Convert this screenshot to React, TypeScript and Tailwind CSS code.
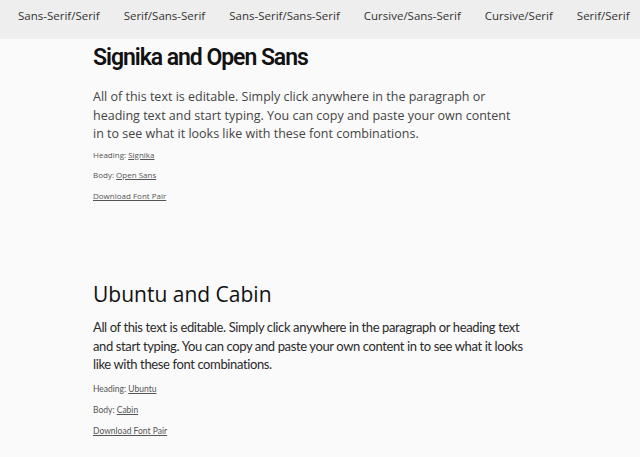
import React from "react";

const navItems = [
  "Sans-Serif/Serif",
  "Serif/Sans-Serif",
  "Sans-Serif/Sans-Serif",
  "Cursive/Sans-Serif",
  "Cursive/Serif",
  "Serif/Serif",
];

export default function App() {
  return (
    <div className="w-[640px] h-[457px] overflow-hidden bg-[#fafafa] font-['Open_Sans',sans-serif]">
      <nav className="h-[39px] bg-[#eeeeee] flex pl-[6px] pt-[8px] whitespace-nowrap overflow-hidden">
        {navItems.map((n) => (
          <span key={n} className="px-[12px] text-[11.5px] leading-[16px] text-[#333] font-['Open_Sans',sans-serif]">
            {n}
          </span>
        ))}
      </nav>

      <main className="pl-[93px]">
        <section className="pt-[5px]">
          <h1 className="text-[23px] leading-[28px] font-semibold text-[#111] tracking-[-1.05px] font-['Roboto',sans-serif]">
            Signika and Open Sans
          </h1>
          <p className="mt-[16px] w-[426px] text-[12.5px] leading-[18.5px] text-[#444] font-['Open_Sans',sans-serif]">
            All of this text is editable. Simply click anywhere in the paragraph or heading text and start typing. You can copy and paste your own content in to see what it looks like with these font combinations.
          </p>
          <div className="mt-[1px] text-[8px] leading-[20.5px] text-[#555] font-['Open_Sans',sans-serif]">
            <div>
              Heading: <span className="underline">Signika</span>
            </div>
            <div>
              Body: <span className="underline">Open Sans</span>
            </div>
            <div>
              <span className="underline">Download Font Pair</span>
            </div>
          </div>
        </section>

        <section className="mt-[74px]">
          <h1 className="text-[21px] leading-[28px] font-normal text-[#111] font-['Open_Sans',sans-serif]">
            Ubuntu and Cabin
          </h1>
          <p className="mt-[10px] w-[432px] text-[13px] leading-[18.5px] tracking-[-0.38px] text-[#2a2a2a] font-['Lato',sans-serif]">
            All of this text is editable. Simply click anywhere in the paragraph or heading text and start typing. You can copy and paste your own content in to see what it looks like with these font combinations.
          </p>
          <div className="mt-[5px] text-[8.5px] leading-[21px] text-[#555] font-['Lato',sans-serif]">
            <div>
              Heading: <span className="underline">Ubuntu</span>
            </div>
            <div>
              Body: <span className="underline">Cabin</span>
            </div>
            <div>
              <span className="underline">Download Font Pair</span>
            </div>
          </div>
        </section>
      </main>
    </div>
  );
}
